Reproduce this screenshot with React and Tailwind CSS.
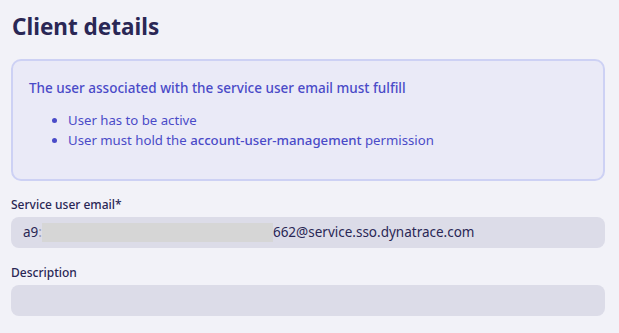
import React from "react";

export default function App() {
  return (
    <div
      className="w-[619px] h-[333px] overflow-hidden bg-[#f2f2f8] px-[11px] pt-[11px]"
      style={{ fontFamily: '"Noto Sans", Inter, sans-serif' }}
    >
      <h1 className="text-[22.5px] leading-[32px] font-bold text-[#2a2755] ml-[1px]">
        Client details
      </h1>

      <div className="mt-[16px] w-[594px] h-[122px] rounded-[10px] border-2 border-[#cdd1f4] bg-[#eaeaf7] pl-[16px] pt-[17px] text-[#4a4bc8]">
        <p className="text-[13.5px] leading-[20px] font-medium">
          The user associated with the service user email must fulfill
        </p>
        <ul className="mt-[12px] pl-[39px] list-disc text-[13.2px] leading-[20px]">
          <li>User has to be active</li>
          <li>
            User must hold the{" "}
            <span className="font-medium">account-user-management</span>{" "}
            permission
          </li>
        </ul>
      </div>

      <div className="mt-[15px] flex flex-col gap-[3px]">
        <label className="text-[12px] leading-[18px] font-medium text-[#2a2755]">
          Service user email*
        </label>
        <div className="w-[594px] h-[31px] rounded-[8px] bg-[#dcdce8] flex items-center pl-[12px] text-[13.5px] text-[#2a2755]">
          <span>a9</span>
          <span className="text-[#9a9ab0]">:</span>
          <span className="w-[231px] h-[19px] bg-[#d6d6d6]" />
          <span>662@service.sso.dynatrace.com</span>
        </div>
      </div>

      <div className="mt-[16px] flex flex-col gap-[3px]">
        <label className="text-[12px] leading-[18px] font-medium text-[#2a2755]">
          Description
        </label>
        <div className="w-[594px] h-[31px] rounded-[8px] bg-[#dcdce8]" />
      </div>
    </div>
  );
}
